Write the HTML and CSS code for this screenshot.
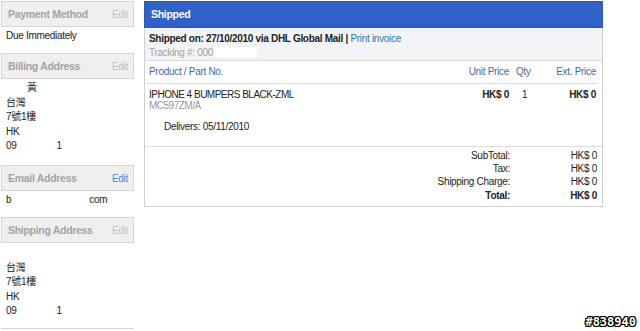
FILE: index.html
```html
<!DOCTYPE html>
<html lang="zh-Hant">

<head>
  <meta charset="UTF-8">
  <meta name="viewport" content="width=device-width, initial-scale=1.0">
  <title>Order</title>
  <link rel="stylesheet" href="styles.css">
</head>

<body>
  <div class="page">
    <div class="side">
      <div class="box-hd"><span>Payment Method</span><a class="edit">Edit</a></div>
      <div class="box-bd">
        <p>Due Immediately</p>
      </div>

      <div class="box-hd"><span>Billing Address</span><a class="edit">Edit</a></div>
      <div class="box-bd addr">
        <p class="indent">黃</p>
        <p>台灣</p>
        <p>7號1樓</p>
        <p>HK</p>
        <p>09<span class="gap"></span>1</p>
      </div>

      <div class="box-hd"><span>Email Address</span><a class="edit on">Edit</a></div>
      <div class="box-bd">
        <p>b<span class="gap2"></span>com</p>
      </div>

      <div class="box-hd"><span>Shipping Address</span><a class="edit">Edit</a></div>
      <div class="box-bd addr ship">
        <p>台灣</p>
        <p>7號1樓</p>
        <p>HK</p>
        <p>09<span class="gap"></span>1</p>
      </div>
    </div>

    <div class="main">
      <div class="panel">
        <div class="panel-hd">Shipped</div>
        <div class="ship-info">
          <p class="ship-on">Shipped on: 27/10/2010 via DHL Global Mail | <a>Print invoice</a></p>
          <p class="track">Tracking #: 000<span class="mask"></span></p>
        </div>
        <table class="items">
          <tr class="th">
            <td class="name">Product / Part No.</td>
            <td class="price">Unit Price</td>
            <td class="qty">Qty</td>
            <td class="ext">Ext. Price</td>
          </tr>
          <tr class="item">
            <td class="name">IPHONE 4 BUMPERS BLACK-ZML<br><span class="part">MC597ZM/A</span></td>
            <td class="price"><b>HK$ 0</b></td>
            <td class="qty">1</td>
            <td class="ext"><b>HK$ 0</b></td>
          </tr>
        </table>
        <p class="delivers">Delivers: 05/11/2010</p>
        <table class="totals">
          <tr><td class="lbl">SubTotal:</td><td class="val">HK$ 0</td></tr>
          <tr><td class="lbl">Tax:</td><td class="val">HK$ 0</td></tr>
          <tr><td class="lbl">Shipping Charge:</td><td class="val">HK$ 0</td></tr>
          <tr class="grand"><td class="lbl">Total:</td><td class="val">HK$ 0</td></tr>
        </table>
      </div>
    </div>
  </div>
  <div class="mark">#838940</div>
</body>

</html>
```

FILE: styles.css
```css
* {
  box-sizing: border-box;
}

html,
body {
  margin: 0;
  padding: 0;
  background: #fff;
}

body {
  font-family: "Liberation Sans", Arial, "Noto Sans CJK TC", sans-serif;
  font-size: 10px;
  letter-spacing: -0.3px;
  color: #222;
  width: 640px;
  height: 331px;
  overflow: hidden;
  position: relative;
}

p {
  margin: 0;
}

a {
  color: #2a7ab8;
}

.page {
  display: flex;
  gap: 10px;
  padding: 1px 0 0 1px;
}

/* left column */
.side {
  width: 133px;
  flex: none;
  border-bottom: 1px solid #d4d4d4;
}

.box-hd {
  display: flex;
  justify-content: space-between;
  align-items: center;
  height: 26px;
  padding: 0 5px 0 6px;
  background: #efefef;
  border: 1px solid #d6d6d6;
  font-weight: bold;
  font-size: 10.5px;
  color: #a3a3a3;
}

.box-hd .edit {
  font-weight: normal;
  font-size: 10px;
  color: #c0c0c0;
}

.box-hd .edit.on {
  color: #3b8fcb;
}

.box-bd {
  padding: 3px 0 11px 5px;
  line-height: 12px;
}

.addr {
  padding-top: 2px;
  padding-bottom: 11.5px;
}

.addr p {
  line-height: 14.5px;
}

.addr .indent {
  padding-left: 21px;
}

.ship {
  padding-top: 17.5px;
  padding-bottom: 9px;
}

.gap {
  display: inline-block;
  width: 40px;
}

.gap2 {
  display: inline-block;
  width: 78px;
}

/* right panel */
.main {
  width: 459px;
  flex: none;
}

.panel {
  border: 1px solid #cfcfcf;
  padding-bottom: 4px;
}

.panel-hd {
  background: #2f61c8;
  color: #fff;
  font-weight: bold;
  font-size: 10.5px;
  height: 27px;
  line-height: 25px;
  padding-left: 6px;
  margin: -1px -1px 0;
  border: 1px solid #2a58b6;
}

.ship-info {
  background: #f3f4f8;
  padding: 3px 4px 0;
  height: 33px;
  border-bottom: 1px solid #dcdcdc;
}

.ship-on {
  font-weight: bold;
  line-height: 15px;
}

.ship-on a {
  font-weight: normal;
}

.track {
  color: #a0a0a0;
  line-height: 14px;
}

.mask {
  display: inline-block;
  width: 43px;
  height: 10px;
  background: #fff;
  vertical-align: -1px;
  margin-left: 1px;
}

.items {
  border-collapse: collapse;
  width: 450px;
  margin-left: 1px;
}

.items td {
  padding: 0;
  vertical-align: top;
}

.items .th td {
  height: 22px;
  line-height: 21px;
  color: #4a68a6;
  border-bottom: 1px solid #dcdcdc;
}

.items .name {
  padding-left: 3px;
}

.items .price {
  width: 80px;
  text-align: right;
}

.items .qty {
  width: 37px;
  padding-left: 7px;
}

.items .ext {
  width: 50px;
  text-align: right;
}

.items .item td {
  padding-top: 5px;
  line-height: 11px;
}

.items .item .name {
  letter-spacing: -0.5px;
}

.items .item .qty {
  padding-left: 13px;
}

.part {
  color: #999;
}

.delivers {
  padding: 10px 0 0 19px;
  line-height: 12px;
  height: 36px;
  border-bottom: 1px solid #dcdcdc;
}

.totals {
  border-collapse: collapse;
  margin: 2px 5px 0 auto;
}

.totals td {
  padding: 0;
  height: 13.4px;
  line-height: 13px;
  text-align: right;
}

.totals .val {
  width: 87px;
}

.totals .grand td {
  font-weight: bold;
}

.mark {
  position: absolute;
  right: 4px;
  bottom: 2px;
  font-family: "DejaVu Sans Mono", monospace;
  font-weight: bold;
  font-size: 12px;
  letter-spacing: 0;
  color: #fff;
  text-shadow: 1px 0 #000, -1px 0 #000, 0 1px #000, 0 -1px #000, 1px 1px #000, -1px -1px #000, 1px -1px #000, -1px 1px #000;
}
```
